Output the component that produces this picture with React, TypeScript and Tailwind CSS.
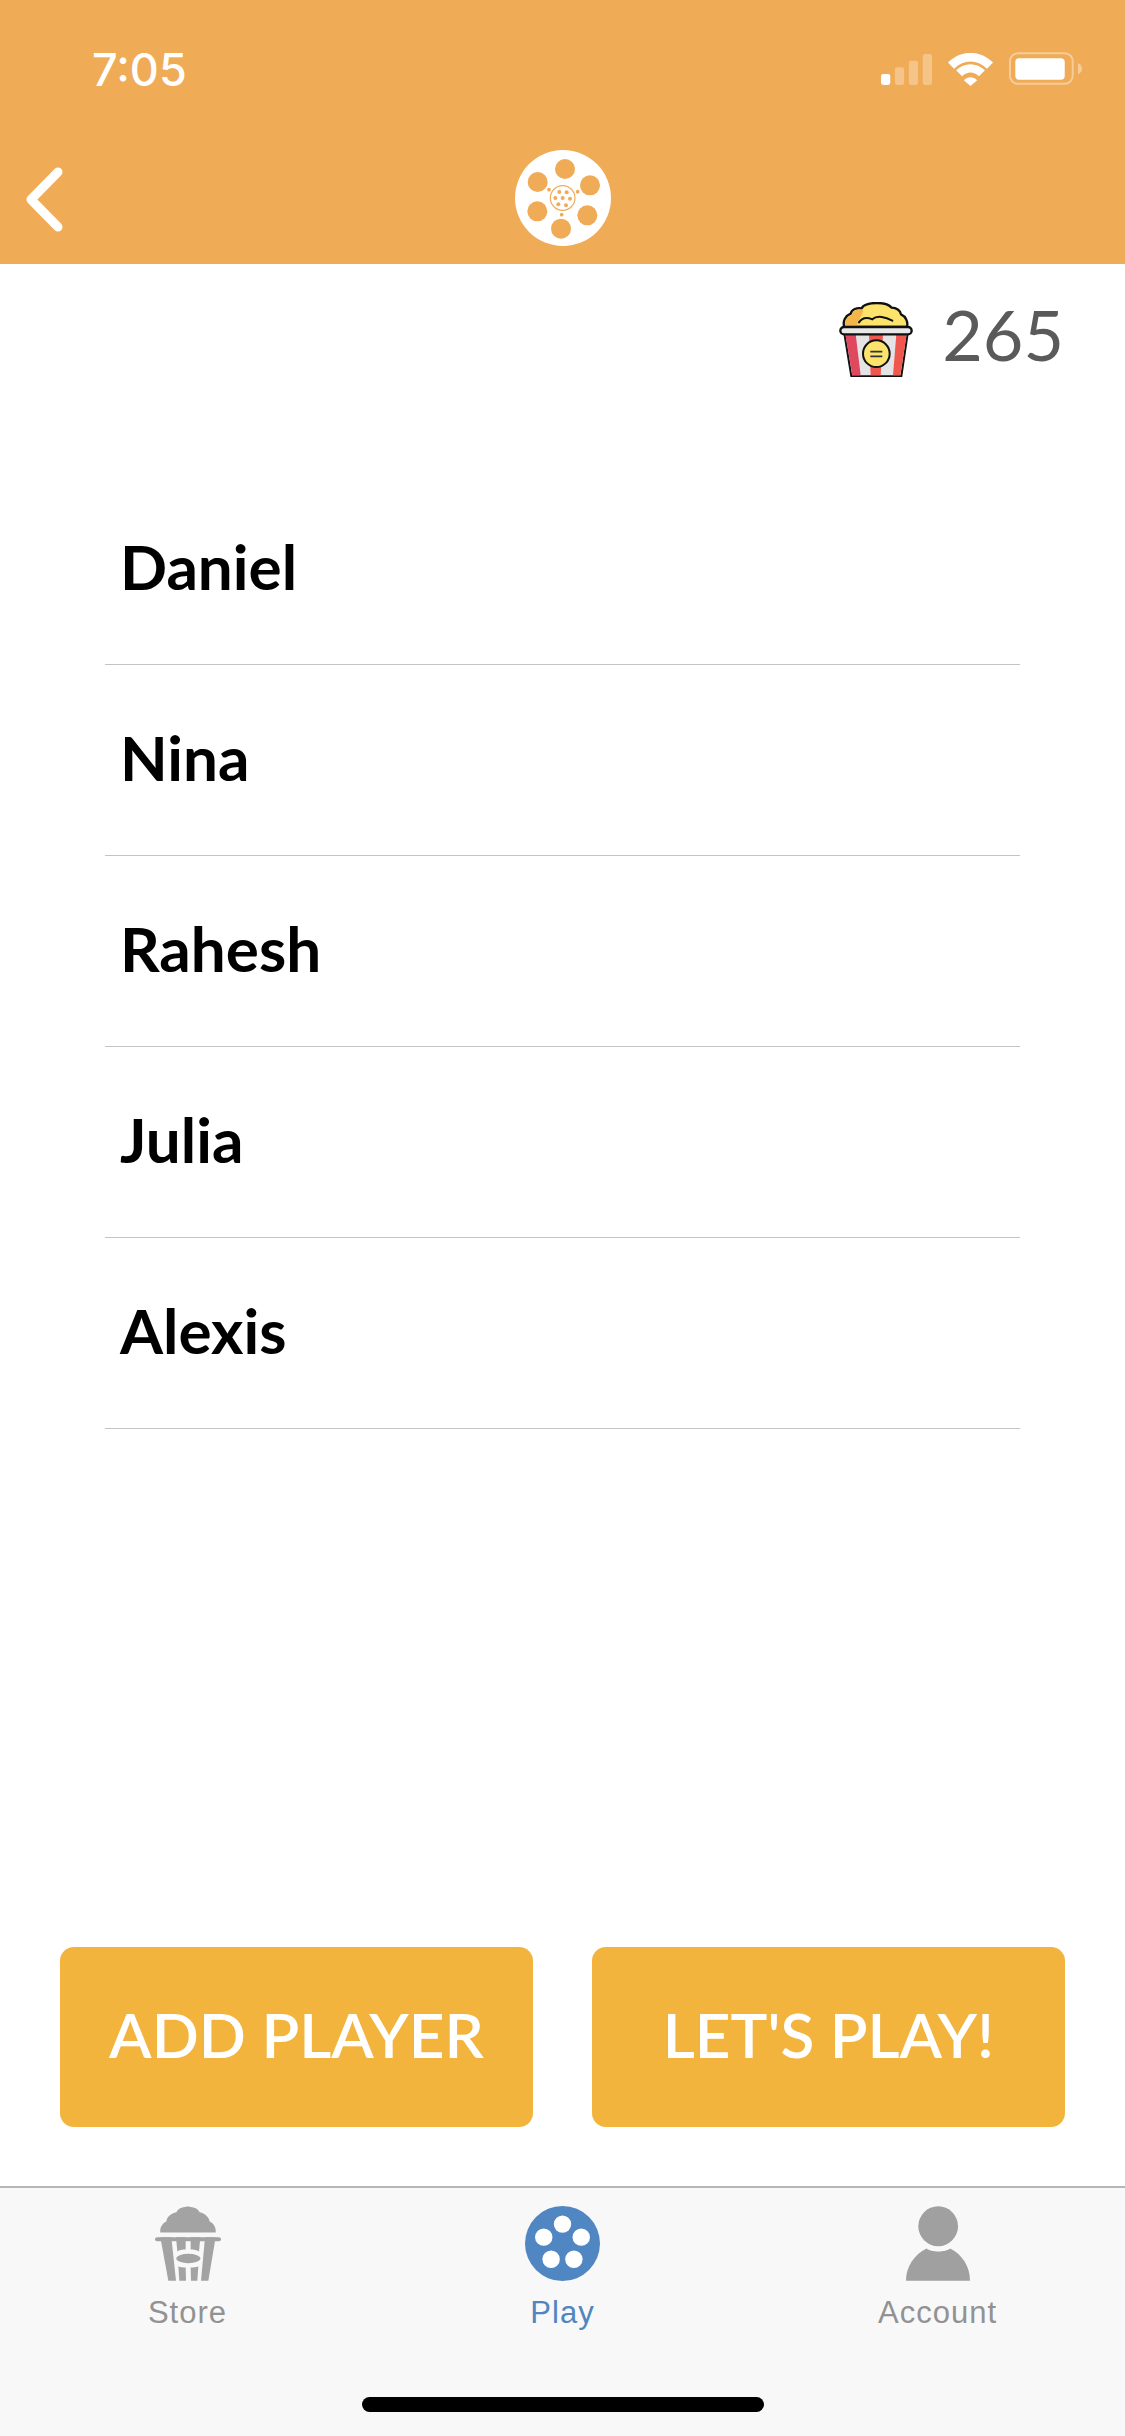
const ORANGE = '#f0ab57';

const players = ['Daniel', 'Nina', 'Rahesh', 'Julia', 'Alexis'];

function StatusIcons() {
  return (
    <div className="flex items-start gap-[16px]">
      <svg width="51" height="31" viewBox="36 40 154 93" className="mt-[1px]">
        <rect x="36" y="100" width="28" height="33" rx="7" fill="#fff" />
        <rect x="78" y="80" width="28" height="53" rx="7" fill="#fff" fillOpacity="0.3" />
        <rect x="120" y="60" width="28" height="73" rx="7" fill="#fff" fillOpacity="0.3" />
        <rect x="162" y="40" width="28" height="93" rx="7" fill="#fff" fillOpacity="0.3" />
      </svg>
      <svg width="45" height="33" viewBox="236 37 134 98">
        <path d="M236 65 C275 27 331 27 370 65 L352 84 C322 55 284 55 254 84 Z" fill="#fff" />
        <path d="M260 88 C285 64 321 64 346 88 L328 106 C313 91 293 91 278 106 Z" fill="#fff" />
        <path d="M283 118 C295 106 311 106 323 118 L303 135 Z" fill="#fff" />
      </svg>
      <svg width="73" height="33" viewBox="417 37 220 98" className="-mt-[1px]">
        <rect x="420" y="40" width="189" height="92" rx="24" fill="none" stroke="#fff" strokeOpacity="0.4" strokeWidth="6" />
        <rect x="436" y="55" width="149" height="65" rx="12" fill="#fff" />
        <path d="M625 70 C634 74 637 80 637 86 C637 93 634 99 625 103 Z" fill="#fff" fillOpacity="0.4" />
      </svg>
    </div>
  );
}

function BackChevron() {
  return (
    <svg width="38" height="65" viewBox="0 0 38 65">
      <polyline points="33,5 6,32.5 33,60" fill="none" stroke="#fff" strokeWidth="9" strokeLinecap="round" strokeLinejoin="round" />
    </svg>
  );
}

function HeaderReel() {
  const holes = [[255, 116], [330, 165], [322, 255], [243, 295], [172, 243], [173, 155]];
  const ticks = [[207, 178], [293, 184], [245, 253]];
  const seeds = [[238, 185], [260, 186], [270, 205], [258, 225], [235, 222], [226, 203], [248, 203]];
  return (
    <svg width="96" height="96" viewBox="105 59 288 288">
      <circle cx="249" cy="203" r="144" fill="#fff" />
      {holes.map(([x, y]) => <circle key={`${x}-${y}`} cx={x} cy={y} r="30" fill={ORANGE} />)}
      {ticks.map(([x, y]) => <circle key={`${x}-${y}`} cx={x} cy={y} r="5.5" fill={ORANGE} />)}
      <circle cx="248" cy="203" r="37" fill="none" stroke={ORANGE} strokeWidth="3.5" />
      {seeds.map(([x, y]) => <circle key={`${x}-${y}`} cx={x} cy={y} r="6" fill={ORANGE} />)}
    </svg>
  );
}

function PopcornBucket() {
  return (
    <svg width="74" height="75" viewBox="118 95 222 225">
      <path
        d="M134 170 C128 152 138 136 153 130 C156 116 172 112 186 114 C192 100 212 98 232 98 C248 98 266 100 276 112 C290 112 302 120 304 132 C318 138 326 154 322 170 Z"
        fill="#fbe36c"
        stroke="#111"
        strokeWidth="7"
        strokeLinejoin="round"
      />
      <path d="M138 166 C133 152 142 140 157 134 C160 120 176 117 190 118 C190 130 178 146 172 166 Z" fill="#f4b64a" />
      <path d="M178 156 C190 138 206 142 218 147 C232 134 258 140 278 151" fill="none" stroke="#111" strokeWidth="6" strokeLinecap="round" />
      <path d="M134 190 L324 190 L305 318 L155 318 Z" fill="#e4e4e4" stroke="#111" strokeWidth="6" strokeLinejoin="round" />
      <path d="M137 192 L168 192 L183 315 L158 315 Z" fill="#e0485f" />
      <path d="M208 192 L250 192 L243 315 L213 315 Z" fill="#f0584f" />
      <path d="M290 192 L321 192 L302 315 L280 315 Z" fill="#f0584f" />
      <rect x="122" y="170" width="214" height="22" rx="11" fill="#e8e8e8" stroke="#111" strokeWidth="7" />
      <circle cx="230" cy="250" r="40" fill="#fbe36c" stroke="#111" strokeWidth="6" />
      <path d="M212 244 H248 M212 258 H248" stroke="#333" strokeWidth="5" />
    </svg>
  );
}

function StoreIcon() {
  return (
    <svg width="66" height="75" viewBox="70 48 198 224" fill="#a3a3a3">
      <path d="M86 127 C84 112 92 100 104 94 C106 78 118 70 134 66 C142 50 158 52 168 48 C180 52 196 50 204 66 C220 70 232 80 234 94 C246 100 254 112 252 127 Z" />
      <rect x="70" y="141" width="198" height="12" rx="6" />
      <path d="M86 141 L119 141 L133 272 L110 272 Z" />
      <path d="M133 141 L162 141 L162 178 C152 178 142 180 137 184 Z" />
      <path d="M177 141 L206 141 L202 184 C196 180 186 178 177 178 Z" />
      <path d="M220 141 L252 141 L230 272 L208 272 Z" />
      <ellipse cx="170" cy="205" rx="36" ry="14" />
      <path d="M140 228 C146 231 154 232 162 232 L163 272 L143 272 Z" />
      <path d="M177 232 C186 232 194 231 200 228 L197 272 L178 272 Z" />
    </svg>
  );
}

function PlayIcon() {
  const holes = [[157, 102], [101, 141], [213, 141], [123, 207], [191, 207]];
  return (
    <svg width="75" height="75" viewBox="45 48 224 224">
      <circle cx="157" cy="160" r="112" fill="#5086c1" />
      {holes.map(([x, y]) => <circle key={`${x}-${y}`} cx={x} cy={y} r="26" fill="#fff" />)}
    </svg>
  );
}

function AccountIcon() {
  return (
    <svg width="64" height="75" viewBox="75 33 193 224" fill="#a0a0a0">
      <circle cx="172" cy="93" r="60" />
      <path d="M75 257 C75 215 100 178 137 160 C150 172 195 172 208 160 C245 178 268 215 268 257 Z" />
    </svg>
  );
}

export default function App() {
  return (
    <div className="flex h-[2436px] w-full flex-col bg-white font-['Lato',sans-serif]">
      <header className="h-[264px] bg-[#f0ab57]">
        <div className="flex h-[132px] items-start justify-between pl-[92px] pr-[43px] pt-[53px]">
          <span className="font-['Inter',sans-serif] text-[45px] font-medium leading-[33px] text-white">7:05</span>
          <StatusIcons />
        </div>
        <div className="grid h-[132px] grid-cols-3 items-center">
          <button className="ml-[25px] mt-[2px] flex w-fit items-center" aria-label="Back">
            <BackChevron />
          </button>
          <div className="justify-self-center">
            <HeaderReel />
          </div>
        </div>
      </header>

      <div className="flex h-[210px] items-start justify-end gap-[29px] pr-[61px] pt-[38px]">
        <PopcornBucket />
        <span className="-mt-[5px] text-[70px] font-normal leading-[75px] text-[#5a5a5a]">265</span>
      </div>

      <ul className="ml-[105px] w-[915px]">
        {players.map((name) => (
          <li key={name} className="flex h-[191px] items-center border-b-[1.5px] border-[#c4c4c8] pb-[5px] pl-[15px] text-[62px] font-bold text-black">
            {name}
          </li>
        ))}
      </ul>

      <div className="mt-auto flex gap-[59px] px-[60px]">
        <button className="h-[180px] flex-1 rounded-[14px] bg-[#f3b43d] pb-[5px] text-[62px] font-semibold text-white">ADD PLAYER</button>
        <button className="h-[180px] flex-1 rounded-[14px] bg-[#f3b43d] pb-[5px] text-[62px] font-semibold text-white">LET'S PLAY!</button>
      </div>

      <nav className="mt-[59px] flex h-[250px] flex-col border-t-2 border-[#b5b5b5] bg-[#f8f8f8] pt-[18px] font-['Liberation_Sans',sans-serif] text-[31px] tracking-[1px]">
        <div className="grid grid-cols-3">
          <div className="flex flex-col items-center gap-[14px] text-[#929292]">
            <StoreIcon />
            <span className="leading-[36px]">Store</span>
          </div>
          <div className="flex flex-col items-center gap-[14px] text-[#4f86c0]">
            <PlayIcon />
            <span className="leading-[36px]">Play</span>
          </div>
          <div className="flex flex-col items-center gap-[14px] text-[#929292]">
            <AccountIcon />
            <span className="leading-[36px]">Account</span>
          </div>
        </div>
        <div className="mx-auto mb-[24px] mt-auto h-[15px] w-[402px] rounded-full bg-black" />
      </nav>
    </div>
  );
}
